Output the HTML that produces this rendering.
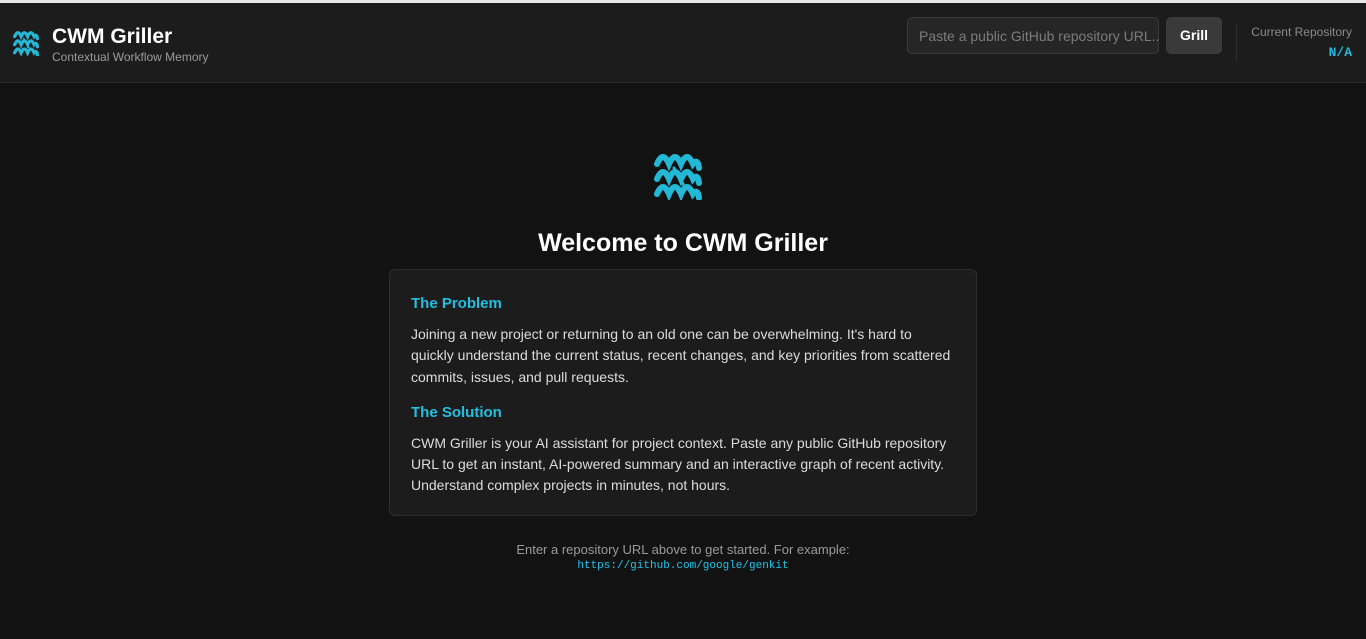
<!DOCTYPE html>
<html><head><style>
*{margin:0;padding:0;box-sizing:border-box}
body{width:1366px;height:639px;background:#121212;font-family:"Liberation Sans",sans-serif;overflow:hidden;position:relative;border-top:3px solid #e8e8e8}
.hdr{height:80px;background:#1c1c1c;border-bottom:1px solid #2c2c2c;position:relative}
.logo{position:absolute;left:13px;top:27px}
.t1{position:absolute;left:52px;top:22px;color:#fff;font-weight:bold;font-size:21px}
.t2{position:absolute;left:52px;top:47px;color:#9a9a9a;font-size:12px}
.inp{position:absolute;left:907px;top:14px;width:252px;height:37px;border:1px solid #3a3a3a;border-radius:5px;background:#262626;color:#7c7c7c;font-size:14px;padding:10px 11px;white-space:nowrap;overflow:hidden}
.btn{position:absolute;left:1166px;top:14px;width:56px;height:37px;background:#3a3a3a;border-radius:5px;color:#fff;font-weight:bold;font-size:14px;text-align:center;line-height:37px}
.sep{position:absolute;left:1236px;top:20px;width:1px;height:39px;background:#2e2e2e}
.cr{position:absolute;right:14px;top:22px;color:#8a8a8a;font-size:12px;text-align:right}
.na{position:absolute;right:14px;top:42px;color:#22b8dc;font-size:13px;font-weight:bold;font-family:"Liberation Mono",monospace}
h1{position:absolute;left:0;width:1366px;top:226px;text-align:center;color:#fff;font-size:25px}
.card{position:absolute;left:389px;top:266px;width:588px;height:247px;background:#1c1c1c;border:1px solid #2e2e2e;border-radius:6px;padding:25px 21px}
.card h2{color:#22bfe0;font-size:15px;margin-bottom:12px}
.card p{color:#dcdcdc;font-size:14px;line-height:21.3px;margin-bottom:16px}
.foot{position:absolute;left:0;width:1366px;top:539px;text-align:center;color:#9a9a9a;font-size:13px}
.foot code{display:block;color:#22c3ea;font-family:"Liberation Mono",monospace;font-size:11px;margin-top:3px}
</style></head><body>
<div class="hdr">
<svg class="logo" width="26" height="26" viewBox="0 0 48 48" fill="none" stroke="#22b8d6" stroke-width="6" stroke-linecap="round"><path d="M3 12q6-14 12 0q6-14 12 0q6-14 12 0q5-6 6 4"/><path d="M3 27q6-14 12 0q6-14 12 0q6-14 12 0q5-6 6 4"/><path d="M3 42q6-14 12 0q6-14 12 0q6-14 12 0q5-6 6 4"/><path d="M20 16l9 16" stroke-width="3"/></svg>
<div class="t1">CWM Griller</div>
<div class="t2">Contextual Workflow Memory</div>
<div class="inp">Paste a public GitHub repository URL...</div>
<div class="btn">Grill</div>
<div class="sep"></div>
<div class="cr">Current Repository</div>
<div class="na">N/A</div>
</div>
<svg style="position:absolute;left:654px;top:149px" width="48" height="48" viewBox="0 0 48 48" fill="none" stroke="#22b8d6" stroke-width="6" stroke-linecap="round"><path d="M3 12q6-14 12 0q6-14 12 0q6-14 12 0q5-6 6 4"/><path d="M3 27q6-14 12 0q6-14 12 0q6-14 12 0q5-6 6 4"/><path d="M3 42q6-14 12 0q6-14 12 0q6-14 12 0q5-6 6 4"/><path d="M20 16l9 16" stroke-width="3"/></svg>
<h1>Welcome to CWM Griller</h1>
<div class="card">
<h2>The Problem</h2>
<p>Joining a new project or returning to an old one can be overwhelming. It's hard to quickly understand the current status, recent changes, and key priorities from scattered commits, issues, and pull requests.</p>
<h2>The Solution</h2>
<p>CWM Griller is your AI assistant for project context. Paste any public GitHub repository URL to get an instant, AI-powered summary and an interactive graph of recent activity. Understand complex projects in minutes, not hours.</p>
</div>
<div class="foot">Enter a repository URL above to get started. For example:<code>https://github.com/google/genkit</code></div>
</body></html>
